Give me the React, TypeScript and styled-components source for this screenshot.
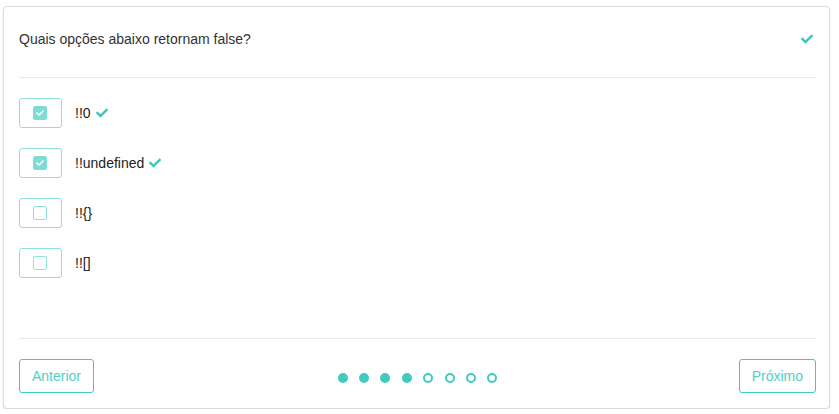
import React from "react";
import styled, { createGlobalStyle } from "styled-components";
import { FaCheck } from "react-icons/fa";

const TEAL = "#3fcbc0";

const Global = createGlobalStyle`
  html, body { margin: 0; padding: 0; background: #fff; }
  body { font-family: "Liberation Sans", Arial, sans-serif; color: #333; }
  * { box-sizing: border-box; }
`;

const Page = styled.div`
  padding: 6px 9px 0 3px;
`;

const Card = styled.div`
  height: 403px;
  border: 1px solid #dcdcdc;
  border-radius: 4px;
  box-shadow: 0 1px 2px rgba(0, 0, 0, 0.12);
  background: #fff;
  padding: 0 13px 0 15px;
  display: flex;
  flex-direction: column;
`;

const Header = styled.div`
  display: flex;
  align-items: center;
  justify-content: space-between;
  padding: 22px 3px 28px 0;
  border-bottom: 1px solid #e9e9e9;
`;

const Question = styled.div`
  font-size: 14px;
  line-height: 20px;
  color: #333;
`;

const Options = styled.div`
  flex: 1;
  display: flex;
  flex-direction: column;
  gap: 20px;
  padding-top: 20px;
  border-bottom: 1px solid #e9e9e9;
`;

const Row = styled.div`
  display: flex;
  align-items: center;
  gap: 13px;
`;

const Box = styled.div`
  width: 43px;
  height: 30px;
  border: 1px solid #8ee2d9;
  border-radius: 3px;
  display: flex;
  align-items: center;
  justify-content: center;
`;

const Tick = styled.div<{ $checked: boolean }>`
  width: 14px;
  height: 14px;
  border-radius: 2px;
  border: 1px solid ${(p) => (p.$checked ? "#7edcd4" : "#8ee2d9")};
  background: ${(p) => (p.$checked ? "#7edcd4" : "#fff")};
  display: flex;
  align-items: center;
  justify-content: center;
  margin-left: -1px;
  color: #fff;
`;

const Label = styled.span`
  font-size: 14px;
  line-height: 20px;
  color: #222;
  display: inline-flex;
  align-items: center;
  gap: 5px;
`;

const CheckIcon = styled(FaCheck)`
  color: #3cc6ba;
  width: 12px;
  height: 12px;
`;

const Footer = styled.div`
  display: grid;
  grid-template-columns: 1fr auto 1fr;
  align-items: center;
  padding: 20px 0 15px 0;
`;

const NavButton = styled.button<{ $right?: boolean }>`
  justify-self: ${(p) => (p.$right ? "end" : "start")};
  height: 34px;
  padding: 0 12px;
  background: #fff;
  border: 1px solid ${TEAL};
  border-radius: 3px;
  color: #4fcfc5;
  font-family: "Liberation Sans", Arial, sans-serif;
  font-size: 14px;
  cursor: pointer;
`;

const Dots = styled.div`
  display: flex;
  gap: 11.4px;
  margin-top: 3px;
`;

const Dot = styled.span<{ $filled: boolean }>`
  width: 10px;
  height: 10px;
  border-radius: 50%;
  border: 2px solid ${TEAL};
  background: ${(p) => (p.$filled ? TEAL : "#fff")};
`;

const options = [
  { label: "!!0", checked: true },
  { label: "!!undefined", checked: true },
  { label: "!!{}", checked: false },
  { label: "!![]", checked: false },
];

export default function App() {
  return (
    <>
      <Global />
      <Page>
        <Card>
          <Header>
            <Question>Quais opções abaixo retornam false?</Question>
            <CheckIcon />
          </Header>
          <Options>
            {options.map((o) => (
              <Row key={o.label}>
                <Box>
                  <Tick $checked={o.checked}>{o.checked && <FaCheck size={8} />}</Tick>
                </Box>
                <Label>
                  {o.label}
                  {o.checked && <CheckIcon />}
                </Label>
              </Row>
            ))}
          </Options>
          <Footer>
            <NavButton>Anterior</NavButton>
            <Dots>
              {Array.from({ length: 8 }).map((_, i) => (
                <Dot key={i} $filled={i < 4} />
              ))}
            </Dots>
            <NavButton $right>Próximo</NavButton>
          </Footer>
        </Card>
      </Page>
    </>
  );
}
